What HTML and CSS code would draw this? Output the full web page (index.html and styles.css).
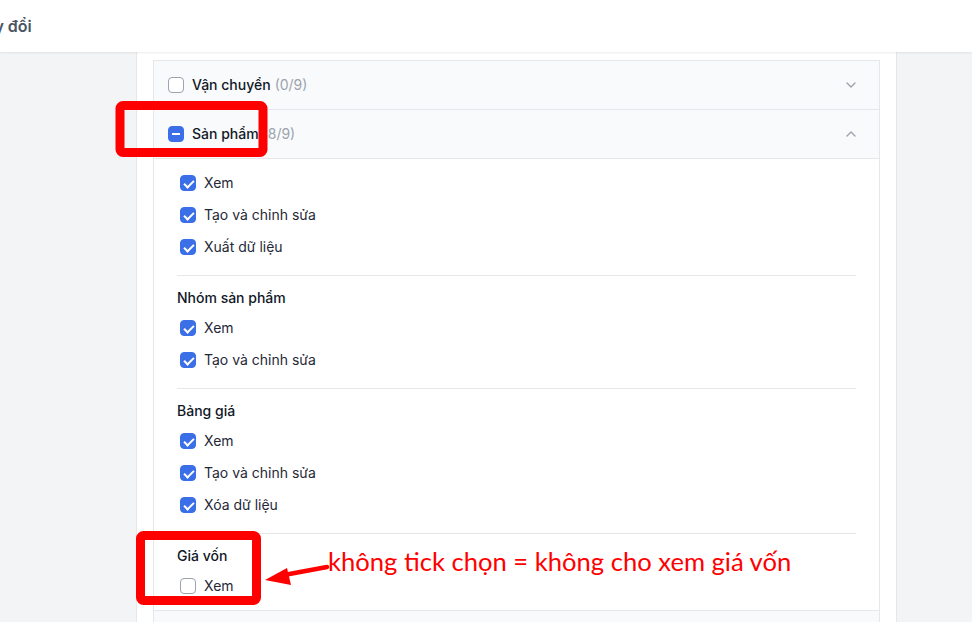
FILE: index.html
```html
<!DOCTYPE html>
<html lang="vi">
<head>
    <meta charset="UTF-8">
    <meta name="viewport" content="width=device-width, initial-scale=1.0">
    <title>Phân quyền</title>
    <link rel="stylesheet" href="styles.css">
</head>
<body>
    <header class="topbar">
        <span class="topbar-title">thay đổi</span>
    </header>

    <main class="page">
        <div class="card">
            <div class="accordion">
                <div class="acc-row">
                    <span class="box"></span>
                    <span class="acc-name">Vận chuyển</span>
                    <span class="acc-count">(0/9)</span>
                    <svg class="chev" width="10" height="6" viewBox="0 0 10 6"><path d="M1 1l4 4 4-4" fill="none" stroke="#9ca3af" stroke-width="1.4" stroke-linecap="round" stroke-linejoin="round"/></svg>
                </div>

                <div class="acc-row open">
                    <span class="box partial"></span>
                    <span class="acc-name">Sản phẩm</span>
                    <span class="acc-count">(8/9)</span>
                    <svg class="chev" width="10" height="6" viewBox="0 0 10 6"><path d="M1 5l4-4 4 4" fill="none" stroke="#9ca3af" stroke-width="1.4" stroke-linecap="round" stroke-linejoin="round"/></svg>
                </div>

                <div class="acc-body">
                    <div class="group">
                        <label class="item"><span class="box checked"></span>Xem</label>
                        <label class="item"><span class="box checked"></span>Tạo và chỉnh sửa</label>
                        <label class="item"><span class="box checked"></span>Xuất dữ liệu</label>
                    </div>
                    <div class="group">
                        <div class="group-title">Nhóm sản phẩm</div>
                        <label class="item"><span class="box checked"></span>Xem</label>
                        <label class="item"><span class="box checked"></span>Tạo và chỉnh sửa</label>
                    </div>
                    <div class="group">
                        <div class="group-title">Bảng giá</div>
                        <label class="item"><span class="box checked"></span>Xem</label>
                        <label class="item"><span class="box checked"></span>Tạo và chỉnh sửa</label>
                        <label class="item"><span class="box checked"></span>Xóa dữ liệu</label>
                    </div>
                    <div class="group">
                        <div class="group-title">Giá vốn</div>
                        <label class="item"><span class="box"></span>Xem</label>
                    </div>
                </div>

                <div class="acc-row"></div>
            </div>
        </div>
    </main>

    <!-- chú thích đỏ vẽ đè lên ảnh chụp -->
    <svg class="marks" width="972" height="622" viewBox="0 0 972 622">
        <rect x="120" y="105.5" width="143" height="47" rx="3" fill="none" stroke="#ff0000" stroke-width="9"/>
        <rect x="140.5" y="535.5" width="116" height="65" rx="3" fill="none" stroke="#ff0000" stroke-width="9"/>
        <line x1="327" y1="567" x2="284" y2="575" stroke="#ff0000" stroke-width="4.5" stroke-linecap="round"/>
        <polygon points="265,580 287,568 291,585" fill="#ff0000"/>
    </svg>
    <div class="note">không tick chọn = không cho xem giá vốn</div>
</body>
</html>
```

FILE: styles.css
```css
:root {
    --blue: #3b6fe7;
    --border: #e5e7eb;
    --muted: #9ca3af;
    --text: #1f2937;
}

* {
    box-sizing: border-box;
    margin: 0;
    padding: 0;
}

body {
    font-family: Inter, 'Noto Sans', sans-serif;
    font-size: 14px;
    line-height: 20px;
    color: var(--text);
    background-color: #f3f4f6;
    height: 622px;
    overflow: hidden;
}

.topbar {
    height: 52px;
    background-color: white;
    display: flex;
    align-items: center;
    box-shadow: 0 1px 2px rgba(0, 0, 0, 0.08);
    position: relative;
    z-index: 2;
    overflow: hidden;
}

.topbar-title {
    margin-left: -30px;
    font-size: 16px;
    font-weight: 600;
    color: #4b5563;
}

.page {
    display: flex;
    height: 570px;
    overflow: hidden;
}

.card {
    margin-left: 136px;
    width: 761px;
    background-color: white;
    border-left: 1px solid var(--border);
    border-right: 1px solid var(--border);
    padding: 8px 16px 0;
}

.accordion {
    border: 1px solid var(--border);
    border-bottom: none;
}

.acc-row {
    height: 49px;
    display: flex;
    align-items: center;
    padding: 0 23px 0 14px;
    background-color: #f9fafb;
    border-bottom: 1px solid var(--border);
}

.acc-name {
    margin-left: 8px;
    font-weight: 500;
    color: #111827;
}

.acc-count {
    margin-left: 4px;
    color: var(--muted);
}

.chev {
    margin-left: auto;
}

.acc-body {
    padding: 8px 23px;
    border-bottom: 1px solid var(--border);
}

.group + .group {
    border-top: 1px solid var(--border);
    margin-top: 12px;
    padding-top: 12px;
}

.group-title {
    font-weight: 500;
    color: #111827;
    margin-bottom: 4px;
}

.item {
    display: flex;
    align-items: center;
    gap: 8px;
    height: 32px;
    padding-left: 3px;
}

.box {
    width: 16px;
    height: 16px;
    flex-shrink: 0;
    border: 1px solid var(--muted);
    border-radius: 4px;
    background-color: white;
    position: relative;
}

.box.checked,
.box.partial {
    border-color: var(--blue);
    background-color: var(--blue);
}

.box.checked::after {
    content: '';
    position: absolute;
    left: 5px;
    top: 2px;
    width: 4px;
    height: 8px;
    border: solid white;
    border-width: 0 2px 2px 0;
    transform: rotate(45deg);
}

.box.partial::after {
    content: '';
    position: absolute;
    left: 3px;
    top: 6px;
    width: 8px;
    height: 2px;
    background-color: white;
}

.marks {
    position: absolute;
    left: 0;
    top: 0;
    z-index: 3;
    pointer-events: none;
}

.note {
    position: absolute;
    left: 328px;
    top: 544px;
    z-index: 3;
    font-family: Lato, 'Liberation Sans', sans-serif;
    font-size: 25.6px;
    line-height: 34px;
    color: #ff0000;
    white-space: nowrap;
}
```
